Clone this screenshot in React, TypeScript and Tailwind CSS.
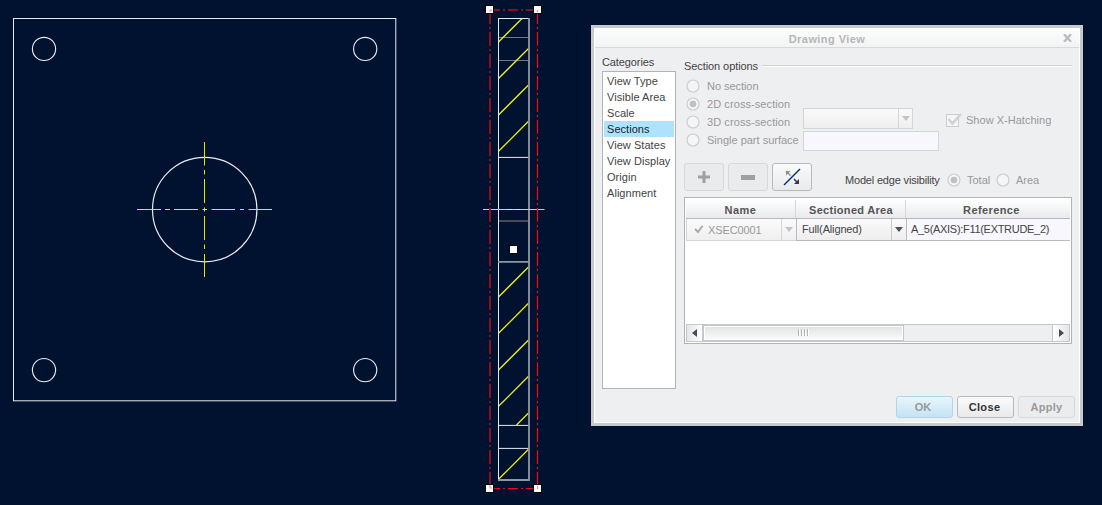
import React from "react";

const categories = ["View Type", "Visible Area", "Scale", "Sections", "View States", "View Display", "Origin", "Alignment"];

const holes = [[44, 48.9], [365.2, 48.9], [44, 370.1], [365.2, 370.1]];

const hatches = [
  [498.5, 42, 522, 18.5],
  [498.5, 78.5, 528.5, 48.5],
  [498.5, 115, 528.5, 85],
  [498.5, 151.3, 528.5, 121.3],
  [498.5, 297, 528.5, 267],
  [498.5, 333.3, 528.5, 303.3],
  [498.5, 370, 528.5, 340],
  [498.5, 406.3, 528.5, 376.3],
  [516.5, 425, 528.5, 413],
  [498.5, 479.3, 528.5, 449.3],
];

const handles = [[489.5, 9.5], [537.5, 9.5], [489.5, 488.5], [537.5, 488.5], [513.5, 249.5]];

function Drawing() {
  return (
    <svg width="1102" height="505" viewBox="0 0 1102 505" fill="none" className="block">
      <g stroke="#e8ebf0">
        <rect x="13.5" y="18.5" width="382.3" height="382.3" />
        {holes.map(([x, y]) => <circle key={`${x}-${y}`} cx={x} cy={y} r="11.6" strokeWidth="1.15" />)}
        <circle cx="204.7" cy="209.6" r="52.2" strokeWidth="1.2" />
      </g>
      <g stroke="#e6e600" strokeWidth="1">
        <path d="M204.5 142v23.5M204.5 170v4.5M204.5 179v24M204.5 207.5v4M204.5 216v24M204.5 244.5v4.5M204.5 254v23" />
        <path d="M137 209.5h24M165 209.5h5M174 209.5h24M202.5 209.5h4.5M211.5 209.5h23.5M240 209.5h4M248.5 209.5h23.5" />
      </g>
      <path d="M499 37.5H529M499 60.5H529" stroke="#747981" />
      <path d="M499 221H529" stroke="#454b59" strokeWidth="2" />
      <g stroke="#eeee1a" strokeWidth="1.3">
        {hatches.map(([a, b, c, d]) => <line key={b} x1={a} y1={b} x2={c} y2={d} />)}
      </g>
      <path d="M498.5 18V480M498 18.5H529M498 157.4H529M498 425.4H529M498 448.4H529" stroke="#e8ebf0" />
      <path d="M498 261.8H529M498 480H529M529 18V481" stroke="#9097a3" strokeWidth="1.8" />
      <path d="M483 209.5H544.5" stroke="#e6e600" />
      <path d="M507 209.5h4.5M515.5 209.5h4.5" stroke="#dcdff4" />
      <path d="M490 10V488" stroke="#8b0f1e" strokeWidth="2" strokeDasharray="14 3 2 3" />
      <path d="M490 10H537" stroke="#8b0f1e" strokeWidth="2" strokeDasharray="10 3 2 3" />
      <path d="M537.5 10V488" stroke="#ff0010" strokeWidth="1.2" strokeDasharray="14 3 2 3" />
      <path d="M490 488.5H537" stroke="#ff0010" strokeDasharray="10 3 2 3" />
      {handles.map(([x, y]) => (
        <rect key={`${x}-${y}`} x={x - 4} y={y - 4} width="8" height="8" fill="#fff" stroke="#000" />
      ))}
      <path d="M490 10v2M490 10h2M537.5 10v2M490 485v3h2M537.5 486v3" stroke="#f4808a" />
    </svg>
  );
}

function Radio({ on = false }: { on?: boolean }) {
  return (
    <svg width="14" height="14" viewBox="0 0 14 14" className="shrink-0">
      <circle cx="7" cy="7" r="6" fill="#f5f5f6" stroke="#cbcdcf" strokeWidth="1.2" />
      {on && <circle cx="7" cy="7" r="3.3" fill="#bfc0c2" />}
    </svg>
  );
}

function Arrow({ color }: { color: string }) {
  return <svg width="8" height="5" viewBox="0 0 8 5"><path d="M0 0h8L4 5z" fill={color} /></svg>;
}

function Option({ label, on, spacing }: { label: string; on?: boolean; spacing: string }) {
  return (
    <div className="flex h-[18px] items-center gap-[7px] pl-[2px]">
      <Radio on={on} />
      <span className={spacing}>{label}</span>
    </div>
  );
}

function ToolButton({ disabled = true, children }: { disabled?: boolean; children: React.ReactNode }) {
  return (
    <button className={`flex h-7 w-10 items-center justify-center rounded-[3px] border ${disabled ? "border-[#d6d8da] bg-[#eaebed]" : "border-[#b7b9bd] bg-linear-to-b from-[#fafafa] to-[#e9eaeb]"}`}>
      {children}
    </button>
  );
}

function SectionTable() {
  return (
    <div className="mt-[6px] flex h-[147px] w-[388px] flex-col border border-[#b1b3b8] bg-white p-px">
      <div className="flex h-[20px] border-b border-[#b5b7bb] bg-linear-to-b from-white to-[#e9eaec] pt-px text-center font-bold leading-[21px] text-[#555]">
        <div className="w-[110px] border-r border-[#d6d8da] tracking-[0.45px]">Name</div>
        <div className="w-[110px] border-r border-[#d6d8da] pl-px tracking-[0.3px]">Sectioned Area</div>
        <div className="flex-1 pl-[7px] tracking-[0.4px]">Reference</div>
      </div>
      <div className="flex h-[22px] leading-[20px]">
        <div className="flex w-[110px] border-b border-l border-[#d3d6d9] bg-linear-to-b from-[#fafafa] to-[#f0f0f1] text-[#999]">
          <div className="flex flex-1 items-center pl-[7px]">
            <svg width="10" height="9" viewBox="0 0 10 9" fill="none"><path d="M1 4l3 3 4.500-6" stroke="#aaa" strokeWidth="2" /></svg>
            <span className="ml-[4px] tracking-[-0.1px]">XSEC0001</span>
          </div>
          <div className="flex w-[15px] items-center justify-center border-l border-[#d3d6d9]"><Arrow color="#c2c4c7" /></div>
        </div>
        <div className="flex w-[110px] border-b border-l border-[#b8babf] bg-linear-to-b from-[#fafafa] to-[#eeeeef] text-[#444]">
          <div className="flex-1 pl-[5px] tracking-[-0.15px]">Full(Aligned)</div>
          <div className="flex w-[15px] items-center justify-center border-l border-[#c6c8cc]"><Arrow color="#51525a" /></div>
        </div>
        <div className="flex-1 border-b border-l border-[#b8babf] bg-[#f9f7fe] pl-[4px] tracking-[-0.3px] text-[#444]">A_5(AXIS):F11(EXTRUDE_2)</div>
      </div>
      <div className="flex-1" />
      <div className="flex h-[18px] w-[384px] border border-[#c4c8cc] bg-[#eeeff1]">
        <div className="flex w-[16px] items-center justify-center border-r border-[#c4c8cc] bg-linear-to-r from-[#e4e5e7] to-white">
          <svg width="5" height="8" viewBox="0 0 5 8"><path d="M5 0v8L0 4z" fill="#484954" /></svg>
        </div>
        <div className="flex h-4 w-[201px] items-center justify-center border border-[#c4c8cc] bg-white p-px">
          <div className="flex h-full w-full justify-center gap-px bg-linear-to-b from-[#e2e3e4] to-[#fafafa] pt-[2px]">
            {[0, 1, 2, 3].map((n) => <div key={n} className="h-[7px] w-[2px] border-r border-white bg-[#b5b5b5]" />)}
          </div>
        </div>
        <div className="ml-auto flex w-[17px] items-center justify-center border-l border-[#c4c8cc] bg-linear-to-r from-white to-[#e4e5e7]">
          <svg width="5" height="8" viewBox="0 0 5 8"><path d="M0 0v8l5-4z" fill="#484954" /></svg>
        </div>
      </div>
    </div>
  );
}

function Dialog() {
  return (
    <div className="absolute left-[591px] top-[25px] h-[401px] w-[492px] border-3 border-[#c6cacd] text-[11px] text-[#444]">
      <div className="flex h-full flex-col border border-white bg-[#eeeff1]">
        <div className="relative flex h-[19px] shrink-0 items-center justify-center border-b border-[#d5d8dc] bg-linear-to-b from-[#fcfcfc] to-[#f2f3f4] pr-[20px] pt-px font-bold leading-4 tracking-[0.43px] text-[#b5b6b8]">
          Drawing View
          <svg width="9" height="8" viewBox="0 0 9 8" className="absolute right-[7px] top-[5px]"><path d="M1 .3l7 7.4M8 .3l-7 7.400" stroke="#b9bbbd" strokeWidth="2.4" /></svg>
        </div>
        <div className="flex h-[341px] shrink-0 pl-[7px]">
          <div className="flex w-[74px] flex-col pt-[6px]">
            <div className="h-[17px] leading-[16px] tracking-[-0.1px]">Categories</div>
            <div className="h-[318px] border border-[#b1b3b8] bg-white px-px py-px leading-[16px] tracking-[0.05px]">
              {categories.map((name) => (
                <div key={name} className={`h-4 whitespace-nowrap pl-[3px] ${name === "Sections" ? "bg-[#aee2ff] text-[#222]" : ""}`}>{name}</div>
              ))}
            </div>
          </div>
          <div className="ml-2 flex w-[388px] flex-col pt-[10px]">
            <div className="flex h-[19px] gap-[4px] leading-4">
              <span className="w-[74px] whitespace-nowrap tracking-[-0.08px]">Section options</span>
              <div className="mt-[7px] h-[2px] flex-1 border-t border-[#d0d2d5] bg-white" />
            </div>
            <div className="flex h-[86px] text-[#999]">
              <div className="w-[119px] whitespace-nowrap">
                <Option label="No section" spacing="tracking-[-0.05px]" />
                <Option label="2D cross-section" spacing="tracking-[0.08px]" on />
                <Option label="3D cross-section" spacing="tracking-[0.08px]" />
                <Option label="Single part surface" spacing="tracking-[0px]" />
              </div>
              <div className="flex w-[143px] flex-col gap-[2px] pt-[31px]">
                <div className="flex h-[21px] w-[110px] border border-[#d3d6d9] bg-linear-to-b from-[#fafafa] to-[#efeff0]">
                  <div className="flex-1" />
                  <div className="flex w-[14px] items-center justify-center border-l border-[#d3d6d9]"><Arrow color="#c2c4c7" /></div>
                </div>
                <div className="h-5 w-[136px] border border-[#d3d6d9] bg-[#f9f7fe]" />
              </div>
              <div className="mt-[34px] flex h-[18px] items-center self-start">
                <svg width="16" height="15" viewBox="0 0 16 15" fill="none">
                  <rect x=".5" y="1.5" width="12" height="12" fill="#f5f5f6" stroke="#cbcdcf" />
                  <path d="M2.5 6l4 4.500L15 1" stroke="#cfd1d3" strokeWidth="2.5" />
                </svg>
                <span className="ml-1 tracking-[0.02px]">Show X-Hatching</span>
              </div>
            </div>
            <div className="flex h-7 items-center gap-1">
              <ToolButton><svg width="12" height="12" viewBox="0 0 12 12"><path d="M4.500 0h3v4.500H12v3H7.500V12h-3V7.500H0v-3h4.500z" fill="#a0a0a0" /></svg></ToolButton>
              <ToolButton><svg width="14" height="5" viewBox="0 0 14 5"><path d="M0 0h14v5H0z" fill="#a0a0a0" /></svg></ToolButton>
              <ToolButton disabled={false}>
                <svg width="18" height="18" viewBox="0 0 18 18">
                  <path d="M1 17L17 1" stroke="#002a94" strokeWidth="1.400" />
                  <path d="M3 3l4.500 4.500" stroke="#919285" strokeWidth="1.500" /><path d="M3 7.500V3h4.500z" fill="#919285" />
                  <path d="M11 11l3 3" stroke="#383942" strokeWidth="1.500" /><path d="M16 11v5h-5z" fill="#383942" />
                </svg>
              </ToolButton>
              <div className="ml-[29px] flex h-4 items-center pt-[6px]">
                <span className="w-[102px] whitespace-nowrap tracking-[-0.18px]">Model edge visibility</span>
                <Radio on /><span className="ml-[6px] mr-[6px] w-[23px] text-[#999]">Total</span>
                <Radio /><span className="ml-[6px] text-[#999]">Area</span>
              </div>
            </div>
            <SectionTable />
          </div>
        </div>
        <div className="mt-[7px] flex justify-end gap-1 pr-1 text-[#999]">
          <button className="h-[22px] w-[57px] rounded-[3px] border border-[#afd5e7] bg-linear-to-b from-[#e9f5fc] to-[#c5e3f3] pr-[3px] font-bold">OK</button>
          <button className="h-[22px] w-[57px] rounded-[3px] border border-[#b7b9bd] bg-linear-to-b from-[#fafafa] to-[#e9eaeb] pr-[2px] font-bold tracking-[0.35px] text-[#333]">Close</button>
          <button className="h-[22px] w-[57px] rounded-[3px] border border-[#d6d8da] bg-[#ebecee] font-bold tracking-[0.3px]">Apply</button>
        </div>
      </div>
    </div>
  );
}

export default function App() {
  return (
    <main className="relative h-[505px] w-[1102px] overflow-hidden bg-[#00122f] font-['Liberation_Sans',Arial,sans-serif]">
      <Drawing />
      <Dialog />
    </main>
  );
}
